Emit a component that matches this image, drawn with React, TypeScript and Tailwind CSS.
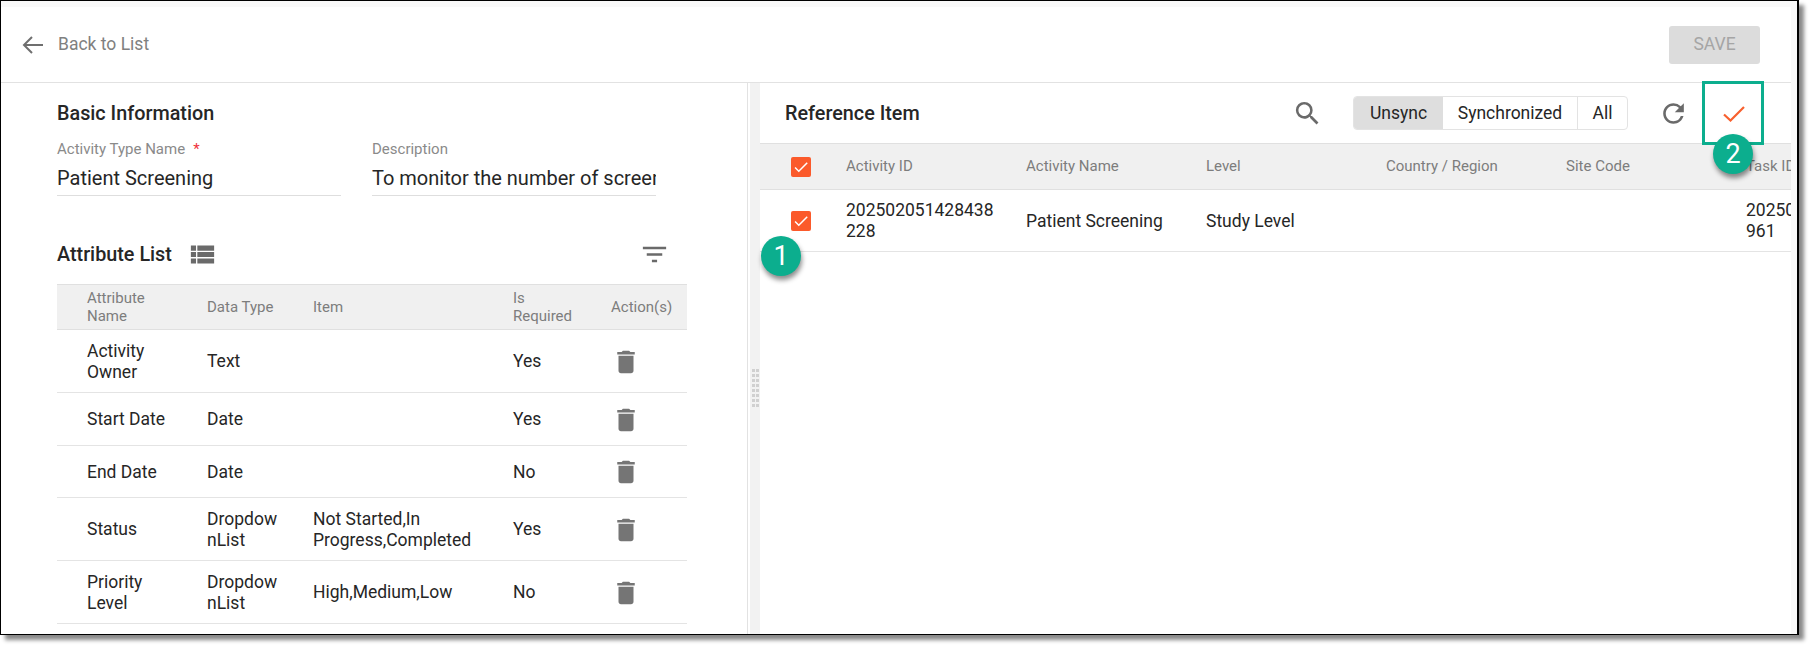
import React from 'react';
import { MdDelete, MdFilterList, MdRefresh, MdSearch, MdViewList, MdCheck } from 'react-icons/md';

const attributes = [
  { name: 'Activity Owner', type: 'Text', item: '', required: 'Yes', h: 'h-[63px]' },
  { name: 'Start Date', type: 'Date', item: '', required: 'Yes', h: 'h-[53px]' },
  { name: 'End Date', type: 'Date', item: '', required: 'No', h: 'h-[52px]' },
  { name: 'Status', type: 'DropdownList', item: 'Not Started,In Progress,Completed', required: 'Yes', h: 'h-[63px]' },
  { name: 'Priority Level', type: 'DropdownList', item: 'High,Medium,Low', required: 'No', h: 'h-[63px]' },
];

function CheckBox() {
  return (
    <div className="w-[20px] h-[20px] rounded-[2px] bg-[#fb5a2b] flex items-center justify-center text-white">
      <MdCheck size={18} />
    </div>
  );
}

function Badge({ n, className }: { n: string; className: string }) {
  return (
    <div className={`absolute w-[40px] h-[40px] rounded-full bg-[#0cae8e] text-white text-[27px] flex items-center justify-center shadow-[1px_4px_5px_rgba(0,0,0,0.45)] ${className}`}>
      {n}
    </div>
  );
}

function Field({ label, value, required }: { label: string; value: string; required?: boolean }) {
  return (
    <div className="w-[284px]">
      <div className="text-[15px] leading-[18px] text-[#8a8a8a] flex">
        {label}
        {required && <span className="text-[#f0323c] ml-[8px]">*</span>}
      </div>
      <div className="mt-[8px] h-[30px] border-b border-[#dedede] text-[20px] leading-[24px] text-[#262626] overflow-hidden whitespace-nowrap">
        {value}
      </div>
    </div>
  );
}

export default function App() {
  return (
    <div className="w-[1810px] h-[647px] bg-white" style={{ fontFamily: 'Roboto, sans-serif' }}>
      <div className="relative w-[1799px] h-[635px] border-t border-l border-r-2 border-b border-black bg-[#f9f9f9] pt-[6px] pr-[6px] shadow-[5px_5px_4px_#8a8a8a] flex flex-col">
        <div className="flex-1 min-h-0 bg-white flex flex-col">
          {/* header */}
          <div className="h-[76px] shrink-0 border-b border-[#e2e2e2] flex items-center justify-between pl-[21px] pr-[31px]">
            <div className="flex items-center gap-[15px] text-[#808080] text-[17.5px]">
              <svg width="21" height="18" viewBox="0 0 21 18" fill="none" stroke="#6f6f6f" strokeWidth="2">
                <path d="M21 9H2" />
                <path d="M10 1L2 9l8 8" />
              </svg>
              <span>Back to List</span>
            </div>
            <button className="w-[91px] h-[38px] rounded-[3px] bg-[#dcdcdc] text-[#a5a5a5] text-[17.5px]">SAVE</button>
          </div>

          <div className="flex-1 min-h-0 flex">
            {/* left side */}
            <div className="w-[747px] shrink-0 border-r border-[#e2e2e2] pl-[56px] pt-[20px]">
              <h2 className="text-[19.8px] leading-[22px] font-medium text-[#262626]">Basic Information</h2>
              <div className="flex gap-[31px] mt-[15px]">
                <Field label="Activity Type Name" value="Patient Screening" required />
                <Field label="Description" value="To monitor the number of screenings completed" />
              </div>
              <div className="w-[630px] h-[29px] mt-[44px] flex items-center justify-between pr-[17px]">
                <div className="flex items-center gap-[15px]">
                  <h2 className="text-[19.8px] leading-[22px] font-medium text-[#262626]">Attribute List</h2>
                  <MdViewList size={31} className="text-[#6a6a6a]" />
                </div>
                <MdFilterList size={31} className="text-[#6a6a6a]" />
              </div>
              <div className="w-[630px] mt-[15px]">
                <div className="h-[46px] bg-[#f0f0f0] border-t border-b border-[#e0e0e0] grid grid-cols-[120px_106px_200px_98px_1fr] items-center pl-[30px] text-[15px] leading-[18px] text-[#7d7d7d]">
                  <div className="pr-[40px]">Attribute Name</div>
                  <div>Data Type</div>
                  <div>Item</div>
                  <div className="pr-[30px]">Is Required</div>
                  <div>Action(s)</div>
                </div>
                {attributes.map((a) => (
                  <div key={a.name} className={`${a.h} pt-[1px] border-b border-[#e4e4e4] grid grid-cols-[120px_106px_200px_98px_1fr] items-center pl-[30px] text-[17.5px] leading-[21px] text-[#262626]`}>
                    <div className="pr-[24px]">{a.name}</div>
                    <div className="pr-[30px] break-all">{a.type}</div>
                    <div className="pr-[20px]">{a.item}</div>
                    <div>{a.required}</div>
                    <div><MdDelete size={30} className="text-[#757575]" /></div>
                  </div>
                ))}
              </div>
            </div>

            {/* splitter */}
            <div className="ml-[2px] w-[10px] shrink-0 bg-[#f2f2f2] flex justify-center pt-[286px]">
              <div className="w-[7px] h-[40px] grid grid-cols-[3px_3px] gap-x-[1px] gap-y-[2px] auto-rows-[3px]">
                {Array.from({ length: 16 }).map((_, i) => (
                  <span key={i} className="bg-[#d0d0d0]" />
                ))}
              </div>
            </div>

            {/* right side */}
            <div className="flex-1 min-w-0 flex flex-col">
              <div className="h-[60px] shrink-0 flex items-center justify-between pl-[25px] pr-[46px]">
                <h2 className="text-[19.8px] font-medium text-[#262626] mt-[1px]">Reference Item</h2>
                <div className="flex items-center">
                  <MdSearch size={31} className="text-[#6a6a6a]" />
                  <div className="ml-[30px] h-[34px] flex rounded-[4px] border border-[#e3e3e3] text-[17.5px] text-[#262626] overflow-hidden">
                    <div className="w-[89px] bg-[#dedede] flex items-center justify-center">Unsync</div>
                    <div className="w-[135px] flex items-center justify-center border-r border-[#e3e3e3]">Synchronized</div>
                    <div className="w-[49px] flex items-center justify-center">All</div>
                  </div>
                  <MdRefresh size={31} className="ml-[30px] text-[#6a6a6a]" />
                  <svg width="22" height="16" viewBox="0 0 22 16" fill="none" stroke="#f8602e" strokeWidth="2.2" className="ml-[34px] mt-[1px]">
                    <path d="M1 8.5l6.5 6L21 1" />
                  </svg>
                </div>
              </div>
              <div className="overflow-hidden">
                <div className="w-[1200px] h-[47px] bg-[#f0f0f0] border-t border-b border-[#e0e0e0] flex items-center text-[15px] text-[#7d7d7d]">
                  <div className="w-[86px] pl-[31px]"><CheckBox /></div>
                  <div className="w-[180px]">Activity ID</div>
                  <div className="w-[180px]">Activity Name</div>
                  <div className="w-[180px]">Level</div>
                  <div className="w-[180px]">Country / Region</div>
                  <div className="w-[180px]">Site Code</div>
                  <div>Task ID</div>
                </div>
                <div className="w-[1200px] h-[62px] pt-[1px] border-b border-[#e4e4e4] flex items-center text-[17.5px] leading-[21px] text-[#262626]">
                  <div className="w-[86px] pl-[31px]"><CheckBox /></div>
                  <div className="w-[180px] pr-[30px] break-all">202502051428438228</div>
                  <div className="w-[180px]">Patient Screening</div>
                  <div className="w-[180px]">Study Level</div>
                  <div className="w-[180px]" />
                  <div className="w-[180px]" />
                  <div className="w-[180px] pr-[30px] break-all">202502051428438961</div>
                </div>
              </div>
            </div>
          </div>
        </div>

        {/* callouts */}
        <div className="absolute left-[1701px] top-[80px] w-[62px] h-[64px] border-[3px] border-[#0cae8e]" />
        <Badge n="1" className="left-[760px] top-[235px]" />
        <Badge n="2" className="left-[1712px] top-[133px]" />
      </div>
    </div>
  );
}
